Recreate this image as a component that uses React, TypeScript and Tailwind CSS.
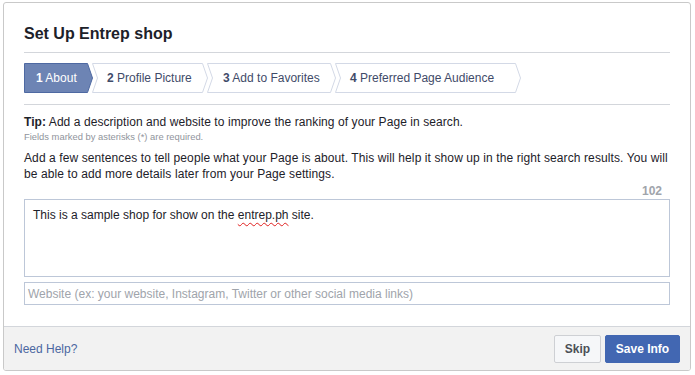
import React from "react";

type Step = { n: string; label: string; w: number; pl: number; active?: boolean; first?: boolean };

const steps: Step[] = [
  { n: "1", label: "About", w: 69, pl: 12, active: true, first: true },
  { n: "2", label: "Profile Picture", w: 116, pl: 15 },
  { n: "3", label: "Add to Favorites", w: 129, pl: 16 },
  { n: "4", label: "Preferred Page Audience", w: 186, pl: 15 },
];

function StepShape({ w, active, first }: { w: number; active?: boolean; first?: boolean }) {
  const pts = first
    ? `0.5,0.5 ${w - 5.5},0.5 ${w - 0.5},15 ${w - 5.5},29.5 0.5,29.5`
    : `0.5,0.5 ${w - 5.5},0.5 ${w - 0.5},15 ${w - 5.5},29.5 0.5,29.5 5.5,15`;
  return (
    <svg className="absolute left-0 top-0" width={w} height={30} viewBox={`0 0 ${w} 30`}>
      <polygon
        points={pts}
        fill={active ? "#6d84b4" : "#ffffff"}
        stroke={active ? "#4e69a2" : "#d3d9e6"}
        strokeWidth={1}
      />
    </svg>
  );
}

export default function App() {
  return (
    <div
      className="w-[695px] h-[375px] bg-white pl-[3px] pt-[2px]"
      style={{ fontFamily: '"Liberation Sans", Arial, Helvetica, sans-serif' }}
    >
      <div className="w-[688px] h-[369px] border border-[#c9c9c9] rounded-[3px] flex flex-col overflow-hidden">
        <div className="px-5 pb-5 flex-1">
          <div className="pt-[21px] pb-[9px] border-b border-[#d3d6db]">
            <div className="text-[16px] leading-[19px] font-bold text-[#1d2129]">Set Up Entrep shop</div>
          </div>
          <div className="mt-[10px] pb-[11px] border-b border-[#d3d6db] flex">
            {steps.map((s, i) => (
              <div
                key={s.n}
                className={`relative h-[30px] flex items-center shrink-0 ${i > 0 ? "-ml-px" : ""}`}
                style={{ width: s.w, paddingLeft: s.pl }}
              >
                <StepShape w={s.w} active={s.active} first={s.first} />
                <span
                  className={`relative text-[12px] leading-[14px] whitespace-nowrap ${
                    s.active ? "text-white" : "text-[#3f4b69]"
                  }`}
                >
                  <span className="font-bold">{s.n}</span> {s.label}
                </span>
              </div>
            ))}
          </div>
          <div className="mt-[9px] text-[12px] leading-[16px] tracking-[0.07px] text-[#1d2129]">
            <span className="font-bold">Tip:</span> Add a description and website to improve the ranking of your
            Page in search.
          </div>
          <div className="mt-px text-[9.4px] leading-[12px] text-[#90949c]">
            Fields marked by asterisks (*) are required.
          </div>
          <div className="mt-[7px] text-[12px] leading-[16px] tracking-[0.1px] text-[#1d2129]">
            Add a few sentences to tell people what your Page is about. This will help it show up in the right
            search results. You will be able to add more details later from your Page settings.
          </div>
          <div className="mt-[2px] pr-2 text-right text-[12px] leading-[14px] font-bold text-[#a0a4ab]">102</div>
          <div className="mt-px h-[78px] border border-[#bdc7d8] px-2 pt-2 text-[12px] leading-[14px] text-[#1d2129]">
            This is a sample shop for show on the{" "}
            <span className="underline decoration-wavy decoration-[#e0201f] decoration-1 underline-offset-[3px]">
              entrep.ph
            </span>{" "}
            site.
          </div>
          <div className="mt-[5px] h-[23px] border border-[#bdc7d8] px-[3px] flex items-center text-[12px] text-[#a0a4ab]">
            Website (ex: your website, Instagram, Twitter or other social media links)
          </div>
        </div>
        <div className="h-[44px] border-t border-[#d3d6db] bg-[#f2f2f2] px-[10px] flex items-center justify-between">
          <span className="text-[12px] text-[#4b67a1]">Need Help?</span>
          <div className="flex gap-[4px]">
            <div className="h-[28px] w-[47px] rounded-[2px] border border-[#ced0d4] bg-[#f6f7f9] flex items-center justify-center text-[12px] font-bold text-[#4b4f56]">
              Skip
            </div>
            <div className="h-[28px] w-[75px] rounded-[2px] border border-[#4267b2] bg-[#4267b2] flex items-center justify-center text-[12px] font-bold text-white">
              Save Info
            </div>
          </div>
        </div>
      </div>
    </div>
  );
}
